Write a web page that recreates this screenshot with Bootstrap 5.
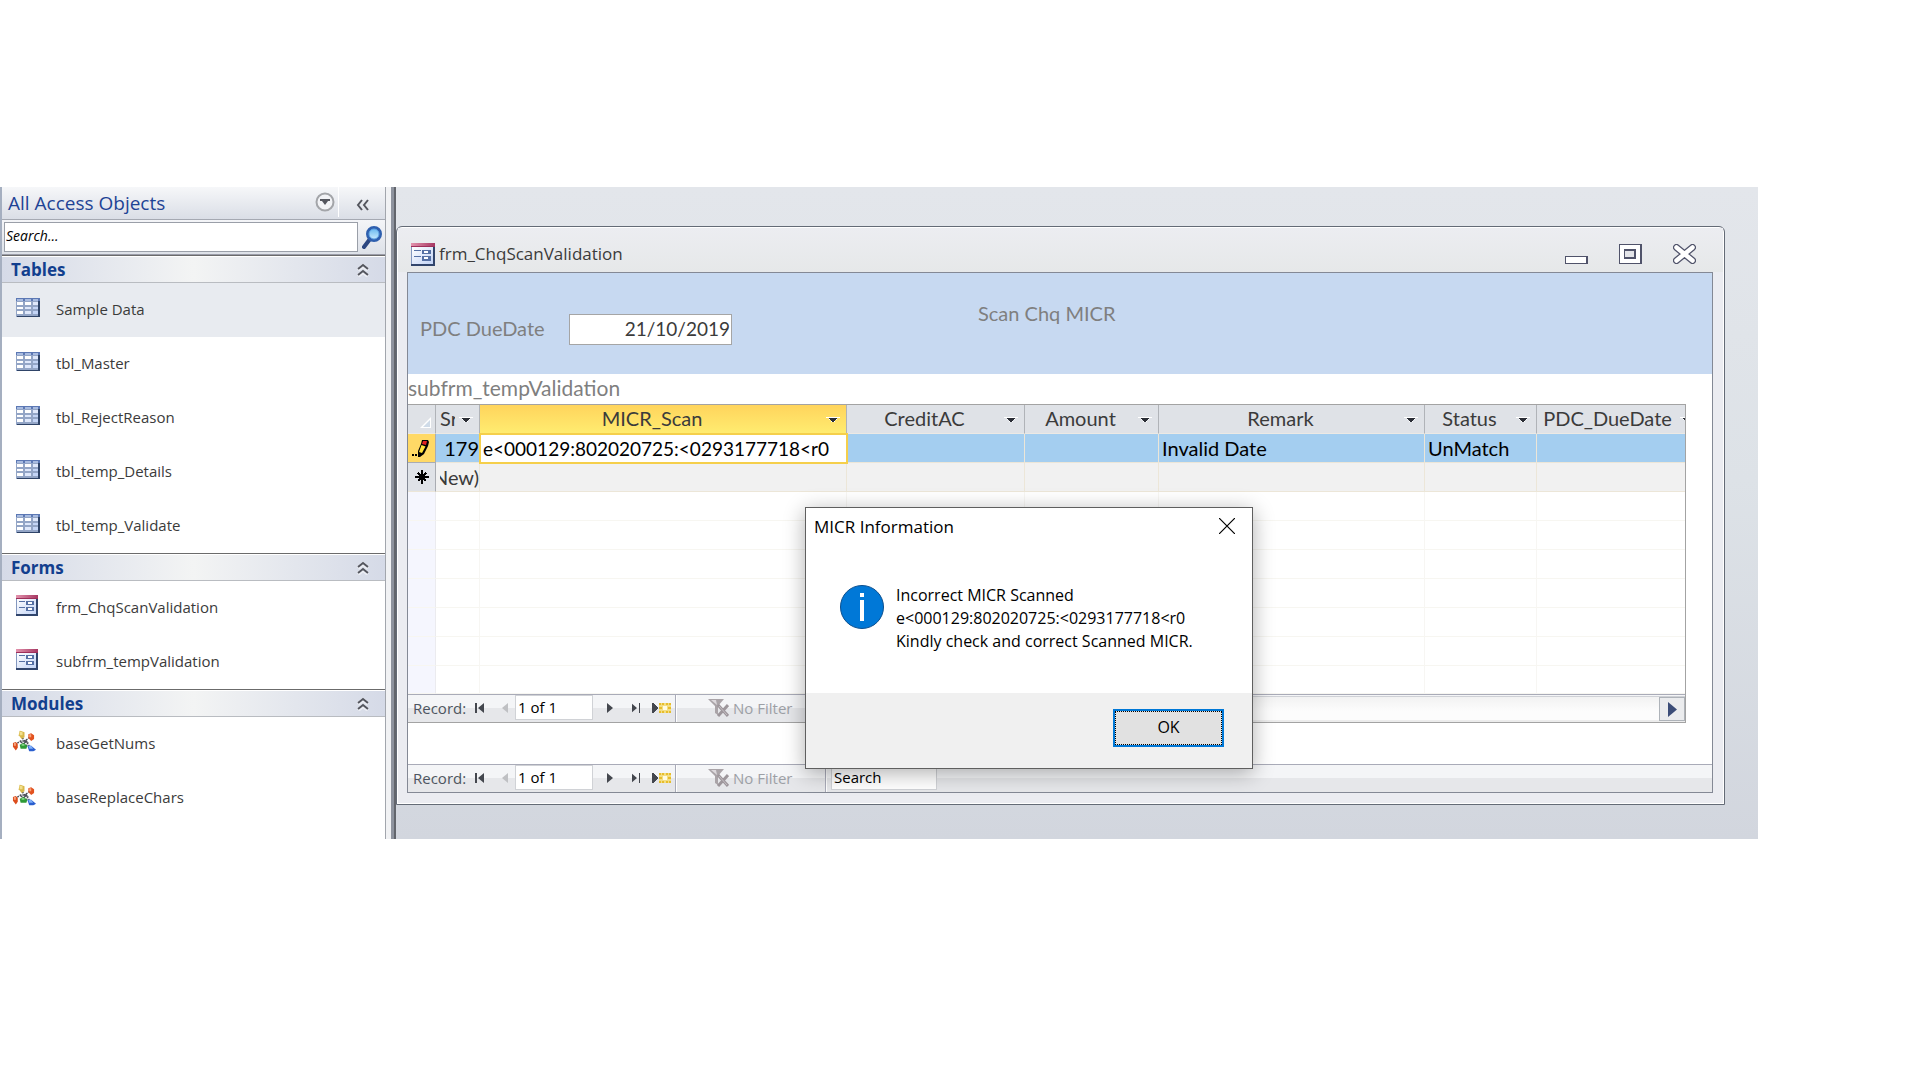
<!DOCTYPE html>
<html lang="en">
<head>
<meta charset="utf-8">
<meta name="viewport" content="width=device-width, initial-scale=1">
<title>frm_ChqScanValidation</title>
<link href="https://cdn.jsdelivr.net/npm/bootstrap@5.3.0/dist/css/bootstrap.min.css" rel="stylesheet">
<style>
:root{--ui:"Open Sans","Noto Sans",sans-serif;--sheet:Lato,"Open Sans",sans-serif}
body{font-family:var(--ui);font-size:15px;line-height:20px;color:#3b3b3b;background:#fff}
svg{display:block;flex:none}
button{background:none;border:0;padding:0;color:inherit}
.app-shell{margin:187px 162px 0 0}
/* navigation pane */
.nav-pane{width:386px;flex:none;border-left:2px solid #a5afc0;border-right:1px solid #a2a6ad;padding-bottom:14px}
.pane-head{height:33px;background:linear-gradient(#f6f7f9,#dadee6);border-bottom:1px solid #a5a9b2;padding-left:6px}
.pane-head h1{font-size:19px;line-height:32px;font-weight:400;color:#1e4395;margin:0}
.pane-menu{border-right:1px solid #fff;height:30px;padding-right:3px;margin-right:17px}
.pane-search{height:35px;background:linear-gradient(#f4f5f8,#dde1e8);padding:2px 3px 2px 2px;border-bottom:1px solid #9a9ca8}
.pane-search input{height:30px;border:1px solid #9a9fa8;padding:0 1px 4px;font-size:14px;font-style:italic;color:#000;background:#fff;min-width:0}
.pane-search input::placeholder{color:#000;opacity:1}
.group-head{height:28px;border-top:1px solid #6b6b6b;border-bottom:1px solid #b9bcc1;box-shadow:inset 0 1px #fff;background:linear-gradient(90deg,#d5dae7,#f3f4f4 50%,#d5dae7);padding:2px 15px 0 9px}
.group-head h2{font-size:17px;line-height:24px;font-weight:700;color:#123f8e;margin:0}
.obj{height:54px;padding:0 0 2px 10px;color:#3b3b3b;text-decoration:none;gap:12px}
.obj svg{margin-bottom:4px}
.obj.picked{background:#e8ebf0}
.splitter{width:10px;flex:none;background:linear-gradient(90deg,#f1f2f4 5px,#8e939e 5px,#8e939e 8px,#62656c 8px)}
/* workspace and form window */
.workspace{background:linear-gradient(#e3e6eb,#dde2e7 45%,#d2d6de);padding:39px 33px 34px 0}
.form-win{border:1px solid #646b76;border-radius:6px 6px 0 0;box-shadow:inset 0 0 0 1px #fff;background:#ebecf1;padding:1px 11px 11px 10px}
.win-title{height:44px;padding:8px 15px 0 4px;margin:0 -10px 0 -9px;background:linear-gradient(#ecedf1,#e6e8e9)}
.win-title h2{font-size:17px;line-height:24px;font-weight:400;margin:0}
.win-title .caption{padding-left:9px}
.win-title .win-btns{gap:31px;padding-right:12px}
.form-body{border:1px solid #848995;background:#fff}
.form-head{height:101px;background:#c7d9f1;font:20px/24px var(--sheet);color:#7f7f7f;padding:28px 0 0 12px}
.form-head label{width:149px;padding-top:15px}
.form-head .due{width:163px;height:31px;margin-top:13px;border:1px solid #a5a5a5;background:#fff;text-align:right;padding:0 1px 2px;font:19px/24px var(--sheet);color:#3b3b3b}
.form-head .heading{font-size:20px;line-height:24px;font-weight:400;margin:0 0 0 246px}
.sub-label{font:21px/28px var(--sheet);color:#7f7f7f;height:30px}
.subform{border-top:1px solid #a3a3a3;border-right:1px solid #a3a3a3;border-bottom:1px solid #a3a3a3;margin-right:26px}
.sheet{table-layout:fixed;width:100%;border-collapse:separate;border-spacing:0;font:20px/26px var(--sheet);color:#3b3b3b}
.sheet th,.sheet td{height:29px;padding:0;border-right:1px solid #f7f6f3;border-bottom:1px solid #f7f6f1;overflow:hidden;white-space:nowrap}
.sheet th{font-weight:400;background:#dfe2e7;border-color:#b0b3b8;border-bottom-color:#ece9e4;padding-bottom:2px}
.sheet th:last-child,.sheet td:last-child{border-right:0}
.sheet th .cap{flex:1 1 auto;text-align:center;min-width:0;overflow:hidden;margin-right:2px}
.sheet th .arrow{margin-right:6px;margin-top:3px}
.sheet th.hot{background:linear-gradient(#ffd45c,#ffec70);border-bottom-color:#f5cf4b}
.sheet .long-cap .cap{flex:none;width:141px}
.sheet tbody td{background:#fff}
.sheet tbody .sel{background:#f5f6fe;border-right-color:#ebebef}
.sheet .current td{background:#a4cef0;color:#000;padding-left:3px;border-right-color:#ece6d8;border-bottom-color:#ece6d8}
.sheet .current .sel{background:#ffd966;padding:0;border-right-color:#a9acb2;border-bottom-color:#a9acb2}
.sheet .fresh td{background:#f1f1f1;border-color:#ece6d8}
.sheet .fresh .sel{background:#dfe2e7;border-right-color:#a9acb2}
.sheet .current .editing{padding:0;background:#fff;outline:2px solid #f5cf4b;outline-offset:-1px}
.sheet .editing input{border:0;width:100%;height:24px;padding:0 0 0 3px;background:#fff;color:#000;font:19px/24px var(--sheet);outline:0}
.sheet tr:last-child td{height:28px}
/* record navigator */
.rec-nav{height:28px;border-top:1px solid #a9abb8;background:linear-gradient(#f4f5f7 13px,#e6e7ea 13px);color:#4d5560;font-size:15px}
.rec-part{height:27px;border-right:1px solid #a9abb8;box-shadow:1px 0 #fff;flex:none;padding-bottom:2px}
.rec-main{width:268px;padding-left:5px}
.rec-main .word{width:62px}
.rec-nav input{border:1px solid #d0d2d6;background:#fff;color:#000;height:25px;padding:0 2px 2px;font-size:15px;border-radius:0}
.rec-main input{width:78px}
.rec-filter{width:150px;padding-left:32px;color:#9da0a6;gap:4px}
.rec-find{width:106px;margin-left:5px}
.hscroll{border-bottom:2px solid #ececec;border-top:1px solid #cfd1d6;background:linear-gradient(#f2f2f2,#fcfcfc 60%);margin-top:1px}
.hscroll button{width:26px;height:24px;border:1px solid #aeb3b9;background:#ebecee}
.form-space{height:41px}
/* message box */
.msg-box{position:absolute;left:805px;top:320px;width:448px;border:1px solid #5f5f5f;background:#fff;color:#000;box-shadow:0 4px 20px rgba(0,0,0,.32)}
.msg-top{height:56px;padding:10px 17px 0 8px}
.msg-top h2{font-size:17px;line-height:18px;font-weight:400;margin:0}
.msg-text{min-height:129px;padding:21px 16px 0 34px;gap:12px;font-size:16px;line-height:23px}
.msg-text p{margin:-1px 0 0}
.msg-foot{height:75px;background:#f0f0f0;padding:16px 28px 0 0}
.ok-btn{width:111px;height:38px;border:2px solid #0078d7;background:#e1e1e1;outline:1px dotted #000;outline-offset:-3px;font-size:16px;padding-bottom:2px}
</style>
<script src="https://cdn.jsdelivr.net/npm/bootstrap@5.3.0/dist/js/bootstrap.bundle.min.js"></script>
</head>
<body>
<svg width="0" height="0" class="position-absolute" aria-hidden="true">
<defs>
<linearGradient id="gBlue" x1="0" y1="0" x2="1" y2="1"><stop offset="0" stop-color="#fff"/><stop offset="1" stop-color="#c3d4f6"/></linearGradient>
<linearGradient id="gPink" x1="0" x2="1"><stop offset="0" stop-color="#e393ad"/><stop offset="1" stop-color="#a63762"/></linearGradient>
<linearGradient id="gLens" x1="0" y1="0" x2="0" y2="1"><stop offset="0" stop-color="#5fb4ee"/><stop offset="1" stop-color="#d3f0ff"/></linearGradient>
</defs>
<symbol id="i-table" viewBox="0 0 24 19" shape-rendering="crispEdges"><path fill="#93a5c6" d="M0 0h24v19H0z"/><path fill="#5c78b4" d="M0 0h24v3H0z"/><path fill="#a9bce0" d="M1 1h6v2H1zM9 1h6v2H9zM17 1h5v2h-5z"/><path fill="#fff" d="M1 4h6v3H1zM9 4h6v3H9zM1 9h6v2H1zM1 13h6v3H1z"/><path fill="#dfe8fb" d="M17 4h5v3h-5zM9 9h6v2H9zM9 13h6v3H9z"/><path fill="#c3d4f6" d="M17 9h5v2h-5zM17 13h5v3h-5z"/><path fill="#2f4468" d="M22 3h2v16H1v-1h21z"/></symbol>
<symbol id="i-form" viewBox="0 0 22 21" shape-rendering="crispEdges"><path fill="#8498bf" d="M0 0h22v21H0z"/><path fill="url(#gBlue)" d="M1 4h19v15H1z"/><path fill="url(#gPink)" d="M0 0h22v4H0z"/><path fill="#9d2f5a" d="M0 3h22v1H0z"/><path fill="#31456c" d="M20 4h2v17H0v-2h20z"/><path fill="#5570a4" d="M3 6h6v1H3zM3 12h6v1H3zM10 6h8v4h-8zM10 12h8v4h-8z"/><path fill="#fff" d="M12 7h4v2h-4zM12 13h4v2h-4z"/></symbol>
<symbol id="i-module" viewBox="0 0 25 22"><path d="M9 5l4 6 6-4M3 15l6-4 4 0 4 2M10 15l6-4M14 10l5 8M9 12l10 6" stroke="#4c4f58" stroke-width="1.5" stroke-dasharray="2 1" fill="none"/><path d="M8 0l5 2v5l-3 2-3-4z" fill="#d8b84a"/><path d="M8 1l3 1v3H8z" fill="#f1df8d"/><path d="M17 4l3-1 3 2v4l-3 2-3-3z" fill="#e2521f"/><path d="M18 4h2v3h-2z" fill="#f7a37c"/><path d="M1 13l3-1 2 2v4l-2 3-3-4z" fill="#dc4d1d"/><path d="M2 13h2v3H2z" fill="#f7a37c"/><path d="M8 15l4-2 4 3-1 3H9z" fill="#2e9a36"/><path d="M10 14h3v2h-3z" fill="#82d484"/><path d="M16 16h4l5 4-3 2h-4z" fill="#2b5fcf"/><path d="M17 16h3l2 3h-4z" fill="#7fb0f8"/></symbol>
<symbol id="i-up" viewBox="0 0 14 14"><path d="M2 7l5-4 5 4M2 13l5-4 5 4" fill="none" stroke="#fff" stroke-width="4" opacity=".5"/><path d="M2 6l5-4 5 4M2 12l5-4 5 4" fill="none" stroke="#54565e" stroke-width="2"/></symbol>
<symbol id="i-drop" viewBox="0 0 14 6" shape-rendering="crispEdges"><path fill="#fff" d="M0 0h14v1h-3v2h-2v2H5V3H3V1H0z"/><path fill="#2b2e36" d="M3 1h8v1h-1v1H9v1H8v1H6V4H5V3H4V2H3z"/></symbol>
<symbol id="i-filter" viewBox="0 0 21 18"><path d="M0 0h16l-6 7v9l-3-2V7z" fill="#aaa4a8"/><path d="M3 1h5l1 5z" fill="#dcd8dc"/><path d="M10 6l10 11M20 6L10 17" stroke="#9d969b" stroke-width="3"/><path d="M11 7l8 9" stroke="#c5bfc4"/></symbol>
<symbol id="i-new" viewBox="0 0 19 12" shape-rendering="crispEdges"><path fill="#44474e" d="M0 1h1l6 5-6 5H0z"/><path fill="#f3dd83" d="M7 1h12v10H7z"/><path fill="#e7bd2c" d="M7 1h2v2H7zM10 1h2v2h-2zM14 1h2v2h-2zM17 1h2v2h-2zM7 5h3v2H7zM16 5h3v2h-3zM7 9h2v2H7zM10 9h2v2h-2zM14 9h2v2h-2zM17 9h2v2h-2z"/><path fill="#fffbe2" d="M11 4h4v4h-4z"/></symbol>
</svg>

<main class="app-shell d-flex position-relative">
  <nav class="nav-pane" aria-label="All Access Objects">
    <div class="pane-head d-flex align-items-start">
      <h1 class="flex-grow-1">All Access Objects</h1>
      <button class="pane-menu d-flex align-items-center" aria-label="Pane menu"><svg width="20" height="20" viewBox="0 0 20 20"><circle cx="10" cy="10" r="8.500" fill="#f2f3f6" stroke="#a3a5a9" stroke-width="2"/><path d="M5 7h10v2h-2l-3 4-3-4H5z" fill="#54565e"/></svg></button>
      <button class="me-3 mt-2 pt-1" aria-label="Collapse pane"><svg width="13" height="12" viewBox="0 1 13 12"><path d="M6 2L2 7l4 5M12 2L8 7l4 5" fill="none" stroke="#54565e" stroke-width="2"/></svg></button>
    </div>
    <div class="pane-search d-flex">
      <input class="flex-grow-1" type="text" placeholder="Search..." aria-label="Search objects">
      <button class="ms-1" aria-label="Search"><svg width="20" height="25" viewBox="1 0 20 25"><path d="M9 14l-6 8" stroke="#2b4680" stroke-width="4" stroke-linecap="round"/><circle cx="13" cy="9" r="6.500" fill="url(#gLens)" stroke="#2e5fae" stroke-width="3"/><circle cx="13" cy="9" r="5" fill="none" stroke="#5fa3e4"/></svg></button>
    </div>
    <div class="group-head d-flex justify-content-between align-items-center"><h2>Tables</h2><button aria-label="Collapse Tables"><svg width="14" height="14"><use href="#i-up"/></svg></button></div>
    <a href="#" class="obj picked d-flex align-items-center"><svg class="ms-1 me-1" width="24" height="19"><use href="#i-table"/></svg>Sample Data</a>
    <a href="#" class="obj d-flex align-items-center"><svg class="ms-1 me-1" width="24" height="19"><use href="#i-table"/></svg>tbl_Master</a>
    <a href="#" class="obj d-flex align-items-center"><svg class="ms-1 me-1" width="24" height="19"><use href="#i-table"/></svg>tbl_RejectReason</a>
    <a href="#" class="obj d-flex align-items-center"><svg class="ms-1 me-1" width="24" height="19"><use href="#i-table"/></svg>tbl_temp_Details</a>
    <a href="#" class="obj d-flex align-items-center"><svg class="ms-1 me-1" width="24" height="19"><use href="#i-table"/></svg>tbl_temp_Validate</a>
    <div class="group-head d-flex justify-content-between align-items-center"><h2>Forms</h2><button aria-label="Collapse Forms"><svg width="14" height="14"><use href="#i-up"/></svg></button></div>
    <a href="#" class="obj d-flex align-items-center"><svg class="ms-1 me-1" width="24" height="21" viewBox="0 0 24 21"><use href="#i-form" width="22" height="21"/></svg>frm_ChqScanValidation</a>
    <a href="#" class="obj d-flex align-items-center"><svg class="ms-1 me-1" width="24" height="21" viewBox="0 0 24 21"><use href="#i-form" width="22" height="21"/></svg>subfrm_tempValidation</a>
    <div class="group-head d-flex justify-content-between align-items-center"><h2>Modules</h2><button aria-label="Collapse Modules"><svg width="14" height="14"><use href="#i-up"/></svg></button></div>
    <a href="#" class="obj d-flex align-items-center"><svg class="me-2" width="24" height="22" viewBox="0 0 25 22"><use href="#i-module"/></svg>baseGetNums</a>
    <a href="#" class="obj d-flex align-items-center"><svg class="me-2" width="24" height="22" viewBox="0 0 25 22"><use href="#i-module"/></svg>baseReplaceChars</a>
  </nav>
  <div class="splitter"></div>

  <section class="workspace flex-grow-1">
    <div class="form-win">
      <div class="win-title d-flex align-items-center justify-content-between">
        <div class="caption d-flex align-items-center gap-1"><svg width="24" height="23" viewBox="0 0 22 21"><use href="#i-form"/></svg><h2>frm_ChqScanValidation</h2></div>
        <div class="win-btns d-flex align-items-end">
          <button aria-label="Minimize"><svg width="23" height="8" viewBox="0 0 23 8" shape-rendering="crispEdges"><path fill="#50536a" d="M0 0h23v8H0z"/><path fill="#fff" d="M1 1h20v6H1z"/></svg></button>
          <button aria-label="Maximize"><svg width="23" height="20" viewBox="0 0 23 20" shape-rendering="crispEdges"><path fill="#50536a" d="M0 0h23v20H0z"/><path fill="#fff" d="M1 1h20v18H1z"/><path fill="#50536a" d="M5 5h12v10H5z"/><path fill="#e3e4e8" d="M6 7h9v6H6z"/></svg></button>
          <button aria-label="Close"><svg width="23" height="20" viewBox="0 0 23 20"><path d="M3.500 3.500l16 13M19.500 3.500l-16 13" stroke="#50536a" stroke-width="7" stroke-linecap="round"/><path d="M3.500 3.500l16 13M19.500 3.500l-16 13" stroke="#fff" stroke-width="4.500" stroke-linecap="round"/></svg></button>
        </div>
      </div>
      <div class="form-body">
        <div class="form-head d-flex align-items-start">
          <label for="due">PDC DueDate</label>
          <input class="due" id="due" type="text" value="21/10/2019">
          <h3 class="heading">Scan Chq MICR</h3>
        </div>
        <div class="sub-label">subfrm_tempValidation</div>
        <div class="subform">
          <table class="sheet">
            <colgroup><col style="width:28px"><col style="width:44px"><col style="width:367px"><col style="width:178px"><col style="width:134px"><col><col style="width:112px"><col style="width:148px"></colgroup>
            <thead><tr>
              <th aria-label="Select all"><svg class="ms-auto me-1 mt-2" width="11" height="11" viewBox="0 0 11 11"><path d="M11 0v11H0z" fill="#fff"/><path d="M10 3v7H3z" fill="#cfdbe8"/></svg></th>
              <th><div class="d-flex align-items-center"><span class="cap ms-1 me-1 text-start">Sr</span><svg class="arrow" width="14" height="6"><use href="#i-drop"/></svg></div></th>
              <th class="hot"><div class="d-flex align-items-center"><span class="cap">MICR_Scan</span><svg class="arrow" width="14" height="6"><use href="#i-drop"/></svg></div></th>
              <th><div class="d-flex align-items-center"><span class="cap">CreditAC</span><svg class="arrow" width="14" height="6"><use href="#i-drop"/></svg></div></th>
              <th><div class="d-flex align-items-center"><span class="cap">Amount</span><svg class="arrow" width="14" height="6"><use href="#i-drop"/></svg></div></th>
              <th><div class="d-flex align-items-center"><span class="cap">Remark</span><svg class="arrow" width="14" height="6"><use href="#i-drop"/></svg></div></th>
              <th><div class="d-flex align-items-center"><span class="cap">Status</span><svg class="arrow" width="14" height="6"><use href="#i-drop"/></svg></div></th>
              <th class="long-cap"><div class="d-flex align-items-center"><span class="cap">PDC_DueDate</span><svg class="arrow" width="14" height="6"><use href="#i-drop"/></svg></div></th>
            </tr></thead>
            <tbody>
              <tr class="current"><td class="sel"><svg class="ms-1" width="18" height="17" viewBox="0 0 18 17"><path fill="#000" d="M0 14h2v2H0zM3 14h2v2H3zM10 0h6l1 2-1 4-4 8-4 3H6v-6l3-7z"/><path fill="#ffe23b" d="M9.500 5l4 1.500-3.500 6.500-3-1z"/><path fill="#e32222" d="M11 1h4l-1 4-4-1z"/></svg></td><td class="text-end">179</td><td class="editing"><input type="text" aria-label="MICR_Scan" value="e&lt;000129:802020725:&lt;0293177718&lt;r0"></td><td></td><td></td><td>Invalid Date</td><td>UnMatch</td><td></td></tr>
              <tr class="fresh"><td class="sel"><svg class="mx-auto" width="14" height="14" viewBox="0 0 14 14" shape-rendering="crispEdges"><path d="M7 0v14M0 7h14" stroke="#000" stroke-width="2"/><path d="M3 3l8 8M11 3L3 11" stroke="#000" stroke-width="1.500"/></svg></td><td><div class="d-flex justify-content-end ms-1 overflow-hidden">(New)</div></td><td></td><td></td><td></td><td></td><td></td><td></td></tr>
              <tr><td class="sel"></td><td></td><td></td><td></td><td></td><td></td><td></td><td></td></tr>
              <tr><td class="sel"></td><td></td><td></td><td></td><td></td><td></td><td></td><td></td></tr>
              <tr><td class="sel"></td><td></td><td></td><td></td><td></td><td></td><td></td><td></td></tr>
              <tr><td class="sel"></td><td></td><td></td><td></td><td></td><td></td><td></td><td></td></tr>
              <tr><td class="sel"></td><td></td><td></td><td></td><td></td><td></td><td></td><td></td></tr>
              <tr><td class="sel"></td><td></td><td></td><td></td><td></td><td></td><td></td><td></td></tr>
              <tr><td class="sel"></td><td></td><td></td><td></td><td></td><td></td><td></td><td></td></tr>
            </tbody>
          </table>
          <div class="rec-nav d-flex">
            <div class="rec-part rec-main d-flex align-items-center">
              <label class="word" for="rec1">Record:</label>
              <button aria-label="First record"><svg width="10" height="12" viewBox="0 0 10 12"><path fill="#44474e" d="M0 1h2v10H0zM9 1v10L3 6z"/></svg></button>
              <button class="ms-3" aria-label="Previous record"><svg width="10" height="12" viewBox="0 0 10 12"><path fill="#bfc0c3" d="M7 1v10L1 6z"/></svg></button>
              <input class="ms-1" id="rec1" type="text" value="1 of 1">
              <button class="ms-2" aria-label="Next record"><svg width="15" height="12" viewBox="-1 0 15 12"><path fill="#44474e" d="M5 1v10l6-5z"/></svg></button>
              <button class="ms-3" aria-label="Last record"><svg width="10" height="12" viewBox="2 0 10 12"><path fill="#44474e" d="M1 1v10l6-5zM9 1h1v10H9z"/></svg></button>
              <button class="ms-2" aria-label="New record"><svg width="23" height="12" viewBox="-2 0 23 12"><use href="#i-new" width="19" height="12"/></svg></button>
            </div>
            <button class="rec-part rec-filter d-flex align-items-center"><svg width="21" height="18"><use href="#i-filter"/></svg>No Filter</button>
            <div class="hscroll flex-grow-1 d-flex justify-content-end"><button class="d-flex align-items-center justify-content-center" aria-label="Scroll right"><svg width="9" height="15" viewBox="0 0 9 15"><path d="M0 0l9 7.500L0 15z" fill="#3c4d78"/></svg></button></div>
          </div>
        </div>
        <div class="form-space"></div>
        <div class="rec-nav d-flex">
          <div class="rec-part rec-main d-flex align-items-center">
            <label class="word" for="rec2">Record:</label>
            <button aria-label="First record"><svg width="10" height="12" viewBox="0 0 10 12"><path fill="#44474e" d="M0 1h2v10H0zM9 1v10L3 6z"/></svg></button>
            <button class="ms-3" aria-label="Previous record"><svg width="10" height="12" viewBox="0 0 10 12"><path fill="#bfc0c3" d="M7 1v10L1 6z"/></svg></button>
            <input class="ms-1" id="rec2" type="text" value="1 of 1">
            <button class="ms-2" aria-label="Next record"><svg width="15" height="12" viewBox="-1 0 15 12"><path fill="#44474e" d="M5 1v10l6-5z"/></svg></button>
            <button class="ms-3" aria-label="Last record"><svg width="10" height="12" viewBox="2 0 10 12"><path fill="#44474e" d="M1 1v10l6-5zM9 1h1v10H9z"/></svg></button>
            <button class="ms-2" aria-label="New record"><svg width="23" height="12" viewBox="-2 0 23 12"><use href="#i-new" width="19" height="12"/></svg></button>
          </div>
          <button class="rec-part rec-filter d-flex align-items-center"><svg width="21" height="18"><use href="#i-filter"/></svg>No Filter</button>
          <input class="rec-find" type="text" value="Search" aria-label="Search records">
        </div>
      </div>
    </div>
  </section>

  <div class="msg-box" role="dialog" aria-labelledby="msgTitle">
    <div class="msg-top d-flex justify-content-between align-items-start">
      <h2 id="msgTitle">MICR Information</h2>
      <button aria-label="Close message"><svg width="16" height="16" viewBox="0 0 16 16"><path d="M0 0l16 16M16 0L0 16" stroke="#000" stroke-width="1.200"/></svg></button>
    </div>
    <div class="msg-text d-flex align-items-start">
      <svg width="44" height="44" viewBox="0 0 44 44"><circle cx="22" cy="22" r="21.500" fill="#0078d7" stroke="#0b4f8f"/><path d="M20 8h4v4h-4zM20 15h4v21h-4z" fill="#fff"/></svg>
      <p>Incorrect MICR Scanned<br>e&lt;000129:802020725:&lt;0293177718&lt;r0<br>Kindly check and correct Scanned MICR.</p>
    </div>
    <div class="msg-foot d-flex justify-content-end align-items-start"><button class="ok-btn">OK</button></div>
  </div>
</main>
</body>
</html>
